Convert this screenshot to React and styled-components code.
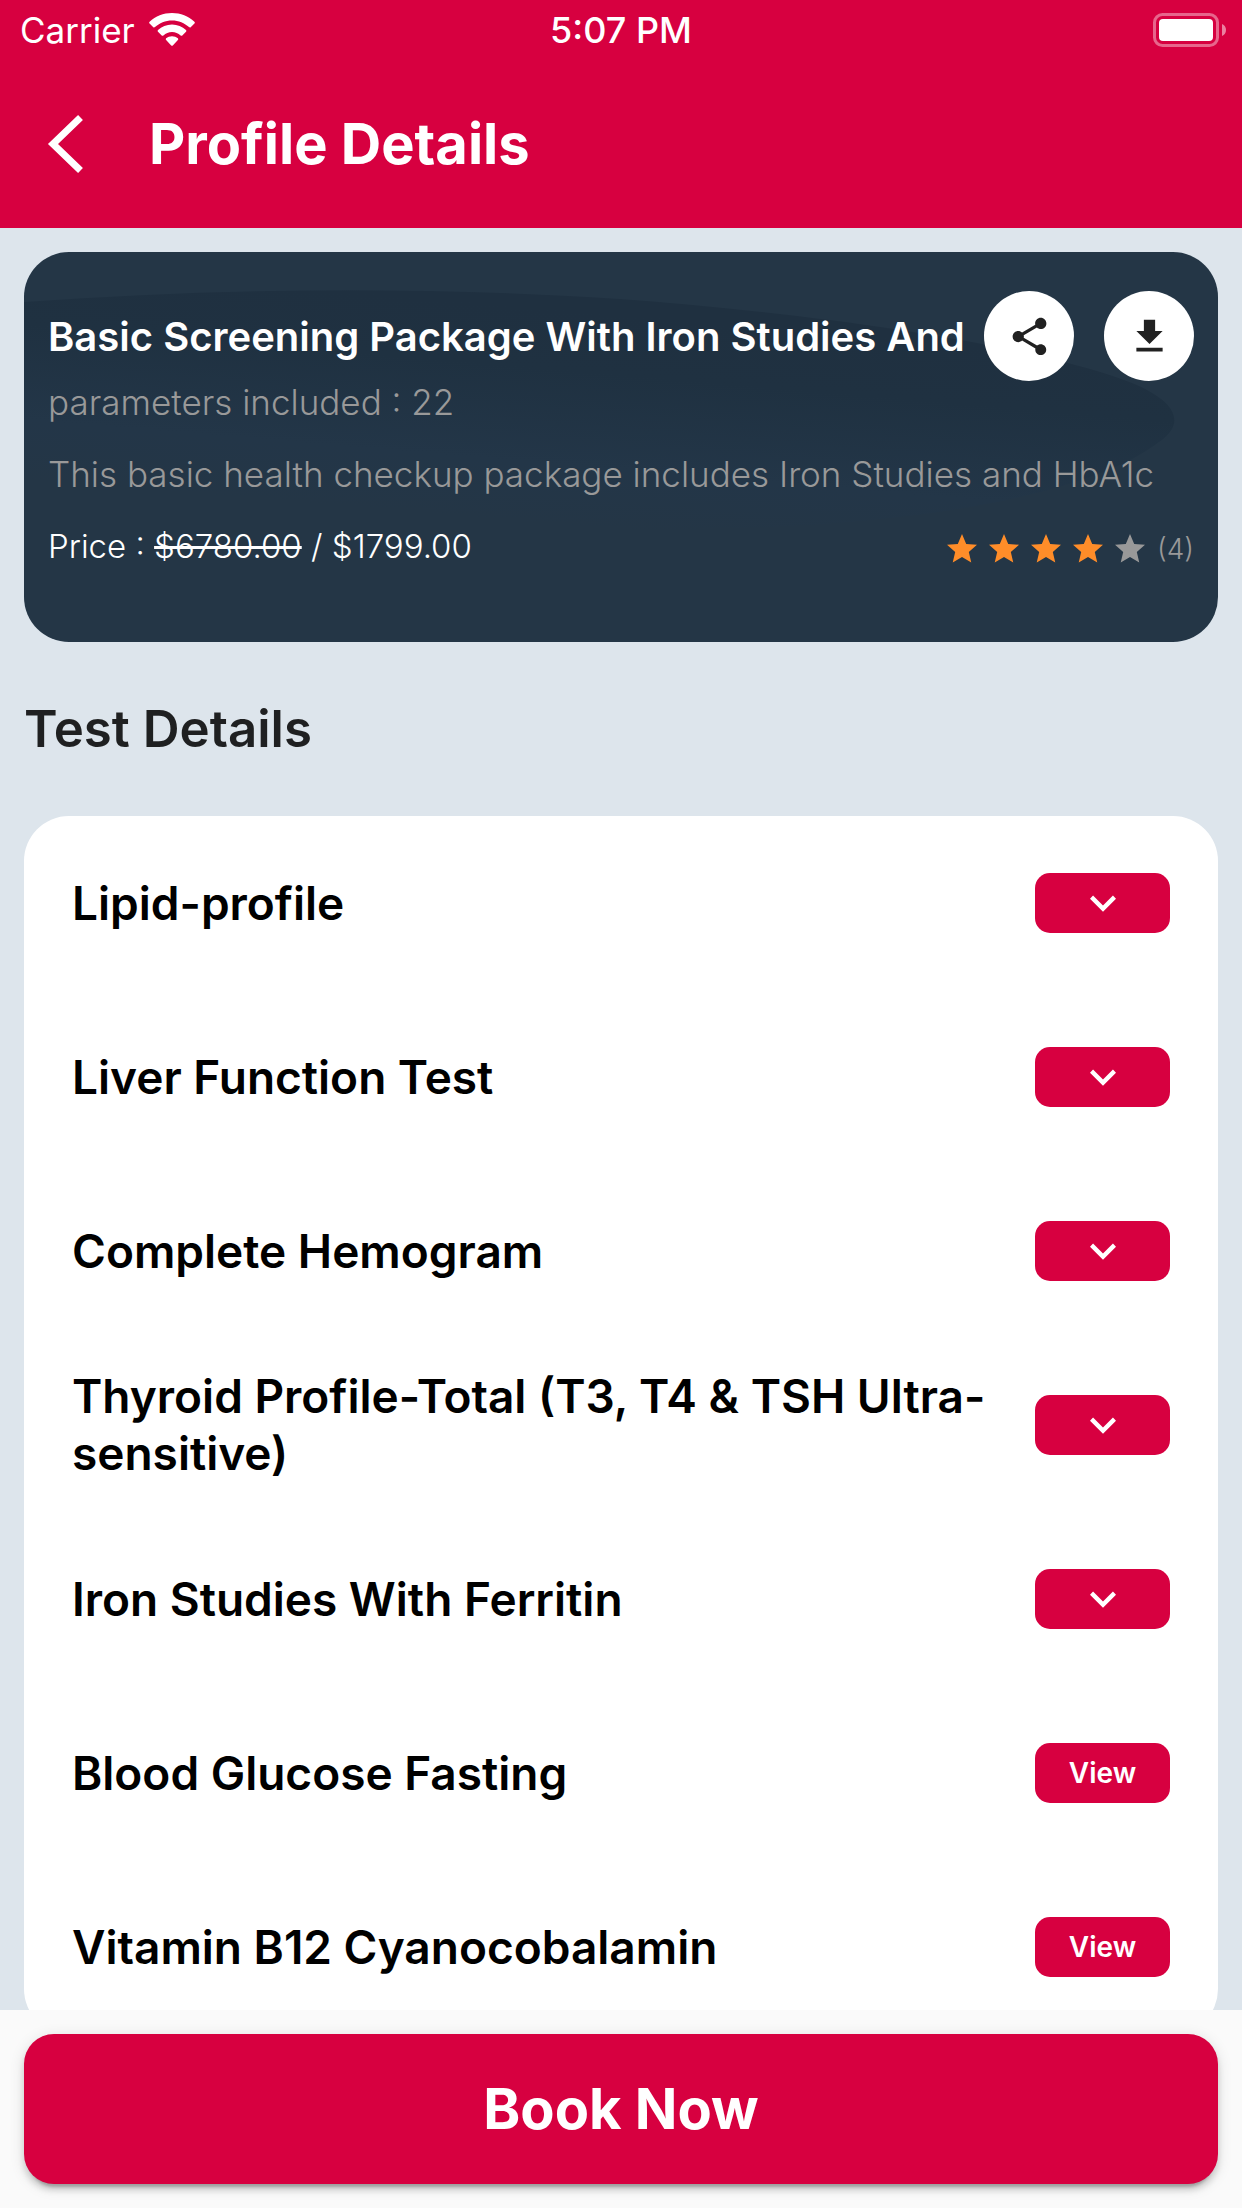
import React, { useState } from 'react';
import styled, { createGlobalStyle, ThemeProvider } from 'styled-components';

const theme = {
  colors: {
    primary: '#d70040',
    pageBg: '#dde5ec',
    footerBg: '#fafafa',
    cardBg: '#243646',
    white: '#ffffff',
    muted: '#999999',
    star: '#ff8d29',
    heading: '#1f2021',
    icon: '#212121'
  },
  radius: {
    small: '15px',
    medium: '30px',
    large: '45px'
  }
};

const GlobalStyle = createGlobalStyle`
  * {
    box-sizing: border-box;
  }

  body {
    margin: 0;
    font-family: Inter, 'Liberation Sans', sans-serif;
  }

  h1, h2, h3, p, ul {
    margin: 0;
    padding: 0;
  }

  button {
    border: none;
    padding: 0;
    font-family: inherit;
    cursor: pointer;
  }

  svg {
    display: block;
  }
`;

const Screen = styled.div`
  display: flex;
  flex-direction: column;
  height: 100vh;
  background-color: ${props => props.theme.colors.pageBg};
`;

const Header = styled.header`
  background-color: ${props => props.theme.colors.primary};
  color: ${props => props.theme.colors.white};
`;

const StatusBar = styled.div`
  display: grid;
  grid-template-columns: 1fr auto 1fr;
  align-items: center;
  height: 60px;
  padding: 0 15px;
`;

const Carrier = styled.div`
  display: flex;
  align-items: center;
  gap: 14px;
  padding-left: 5px;
  font-size: 35px;
`;

const Clock = styled.div`
  font-size: 36px;
  font-weight: 500;
`;

const Battery = styled.div`
  justify-self: end;
`;

const AppBar = styled.div`
  display: flex;
  align-items: center;
  gap: 62px;
  height: 168px;
  padding: 0 45px;
`;

const BackButton = styled.button`
  display: flex;
  background: transparent;
  color: inherit;
`;

const PageTitle = styled.h1`
  font-size: 56px;
  font-weight: 700;
`;

const Content = styled.main`
  flex: 1;
  min-height: 0;
  overflow-y: auto;
  scrollbar-width: none;
  padding: 24px;
`;

const PackageCard = styled.section`
  position: relative;
  display: flex;
  flex-direction: column;
  gap: 30px;
  padding: 39px 24px 75px;
  border-radius: ${props => props.theme.radius.large};
  background-color: ${props => props.theme.colors.cardBg};
  overflow: hidden;
`;

const CardShape = styled.svg`
  position: absolute;
  inset: 0;
  width: 100%;
  height: 100%;
`;

const PackageHeading = styled.div`
  position: relative;
`;

const TitleRow = styled.div`
  display: flex;
  align-items: center;
  gap: 30px;
  height: 90px;
`;

const PackageTitle = styled.h2`
  flex: 1;
  min-width: 0;
  margin-right: -12px;
  overflow: hidden;
  white-space: nowrap;
  color: ${props => props.theme.colors.white};
  font-size: 40px;
  font-weight: 600;
  line-height: 57px;
`;

const RoundButton = styled.button`
  display: flex;
  align-items: center;
  justify-content: center;
  width: 90px;
  height: 90px;
  border-radius: 50%;
  background-color: ${props => props.theme.colors.white};
  color: ${props => props.theme.colors.icon};
`;

const PackageText = styled.p`
  position: relative;
  color: ${props => props.theme.colors.muted};
  font-size: 35px;
  font-weight: 300;
  line-height: 42px;
`;

const PriceRow = styled.div`
  position: relative;
  display: flex;
  align-items: flex-end;
  justify-content: space-between;
`;

const Price = styled.p`
  color: ${props => props.theme.colors.white};
  font-size: 33px;
  font-weight: 300;
  line-height: 42px;
`;

const Rating = styled.div`
  display: flex;
  align-items: center;
  gap: 6px;
`;

const Star = styled.svg`
  width: 36px;
  height: 36px;
  fill: ${props => props.$filled ? props.theme.colors.star : props.theme.colors.muted};
`;

const RatingCount = styled.span`
  padding-left: 3px;
  color: ${props => props.theme.colors.muted};
  font-size: 28px;
  font-weight: 300;
  line-height: 36px;
`;

const SectionTitle = styled.h2`
  color: ${props => props.theme.colors.heading};
  font-size: 51px;
  font-weight: 600;
  line-height: 174px;
`;

const TestList = styled.ul`
  list-style: none;
  padding: 0 48px;
  border-radius: ${props => props.theme.radius.large};
  background-color: ${props => props.theme.colors.white};
`;

const TestRow = styled.li`
  display: flex;
  align-items: center;
  justify-content: space-between;
  gap: 24px;
  min-height: 174px;
`;

const TestName = styled.h3`
  color: #000000;
  font-size: 46px;
  font-weight: 600;
  line-height: 57px;
`;

const RowButton = styled.button`
  display: flex;
  flex-shrink: 0;
  align-items: center;
  justify-content: center;
  width: 135px;
  height: 60px;
  border-radius: ${props => props.theme.radius.small};
  background-color: ${props => props.theme.colors.primary};
  color: ${props => props.theme.colors.white};
  font-size: 28px;
  font-weight: 600;
`;

const Footer = styled.footer`
  padding: 24px;
  background-color: ${props => props.theme.colors.footerBg};
`;

const BookButton = styled.button`
  width: 100%;
  height: 150px;
  border-radius: ${props => props.theme.radius.medium};
  background-color: ${props => props.theme.colors.primary};
  color: ${props => props.theme.colors.white};
  font-size: 56px;
  font-weight: 700;
  box-shadow: 0 9px 3px -6px rgba(0, 0, 0, 0.2), 0 6px 6px rgba(0, 0, 0, 0.14), 0 3px 15px rgba(0, 0, 0, 0.12);
`;

const WifiIcon = () => (
  <svg width="46" height="34" viewBox="0 0 46 34" fill="currentColor">
    <path d="M23 0C14.4 0 6.500 3.300 .6 8.800Q-.3 9.700 .6 10.600L4.300 14.200Q5.100 14.900 6 14.100C10.400 9.900 16.400 7.400 23 7.400S35.600 9.900 40 14.100Q40.900 14.900 41.700 14.200L45.400 10.600Q46.300 9.700 45.400 8.800C39.500 3.300 31.600 0 23 0Z" />
    <path d="M23 11.500C17.600 11.500 12.700 13.600 9 17Q8.100 17.900 9 18.800L12.700 22.400Q13.500 23.200 14.400 22.400C16.700 20.300 19.700 19 23 19S29.300 20.300 31.600 22.400Q32.500 23.200 33.300 22.400L37 18.800Q37.900 17.900 37 17C33.300 13.600 28.400 11.500 23 11.500Z" />
    <path d="M23 23.200C20.700 23.200 18.700 24 17.100 25.300Q16.300 26.200 17.100 27.100L22.200 32.400Q23 33.300 23.800 32.400L28.900 27.100Q29.700 26.200 28.900 25.300C27.300 24 25.300 23.200 23 23.200Z" />
  </svg>
);

const BatteryIcon = () => (
  <svg width="74" height="34" viewBox="0 0 74 34" fill="none">
    <rect x="1.500" y="1.500" width="63" height="31" rx="8" stroke="#fff" strokeOpacity="0.4" strokeWidth="3" />
    <rect x="6" y="6" width="54" height="22" rx="4" fill="#fff" />
    <path d="M69 11C71.500 12 73 14.300 73 17S71.500 22 69 23Z" fill="#fff" fillOpacity="0.5" />
  </svg>
);

const BackIcon = () => (
  <svg width="42" height="60" viewBox="0 0 42 60" fill="none">
    <path d="M35.500 3.500L8 30L35.500 56.500" stroke="currentColor" strokeWidth="7" />
  </svg>
);

const ShareIcon = () => (
  <svg width="45" height="45" viewBox="0 0 24 24" fill="currentColor">
    <path d="M18 16.080c-.76 0-1.440.3-1.960.77L8.910 12.700c.05-.23.09-.46.09-.7s-.04-.47-.09-.7l7.050-4.110c.54.5 1.250.81 2.040.81 1.660 0 3-1.340 3-3s-1.340-3-3-3-3 1.340-3 3c0 .24.04.47.09.7L8.040 9.810C7.500 9.310 6.790 9 6 9c-1.660 0-3 1.340-3 3s1.340 3 3 3c.79 0 1.500-.31 2.040-.81l7.120 4.160c-.05.21-.08.43-.08.65 0 1.610 1.310 2.920 2.920 2.920s2.920-1.310 2.920-2.920-1.310-2.920-2.920-2.920z" />
  </svg>
);

const DownloadIcon = () => (
  <svg width="45" height="45" viewBox="0 0 24 24" fill="currentColor">
    <path d="M19 9h-4V3H9v6H5l7 7 7-7zM5 18v2h14v-2H5z" />
  </svg>
);

const ChevronDownIcon = () => (
  <svg width="52" height="52" viewBox="0 0 24 24" fill="currentColor">
    <path d="M16.590 8.590L12 13.170 7.410 8.590 6 10l6 6 6-6z" />
  </svg>
);

const tests = [
  { id: 1, name: 'Lipid-profile', expandable: true },
  { id: 2, name: 'Liver Function Test', expandable: true },
  { id: 3, name: 'Complete Hemogram', expandable: true },
  { id: 4, name: 'Thyroid Profile-Total (T3, T4 & TSH Ultra-sensitive)', expandable: true },
  { id: 5, name: 'Iron Studies With Ferritin', expandable: true },
  { id: 6, name: 'Blood Glucose Fasting', expandable: false },
  { id: 7, name: 'Vitamin B12 Cyanocobalamin', expandable: false }
];

const App = () => {
  const [openTest, setOpenTest] = useState(null);
  const rating = 4;

  const toggleTest = (id) => {
    setOpenTest(prev => (prev === id ? null : id));
  };

  return (
    <ThemeProvider theme={theme}>
      <GlobalStyle />
      <Screen>
        <Header>
          <StatusBar>
            <Carrier>
              Carrier
              <WifiIcon />
            </Carrier>
            <Clock>5:07 PM</Clock>
            <Battery>
              <BatteryIcon />
            </Battery>
          </StatusBar>
          <AppBar>
            <BackButton aria-label="Back">
              <BackIcon />
            </BackButton>
            <PageTitle>Profile Details</PageTitle>
          </AppBar>
        </Header>

        <Content>
          <PackageCard>
            {/* Soft dark wave behind the package text */}
            <CardShape viewBox="0 0 1194 390" preserveAspectRatio="none" aria-hidden="true">
              <defs>
                <linearGradient id="wave" gradientUnits="userSpaceOnUse" x1="610" y1="40" x2="590" y2="277">
                  <stop offset="0.1" stopColor="#1f3040" />
                  <stop offset="0.35" stopColor="#1f3141" />
                  <stop offset="0.75" stopColor="#233648" />
                  <stop offset="1" stopColor="#243646" />
                </linearGradient>
              </defs>
              <path
                d="M0 50C200 36 400 34 596 47C800 62 1000 92 1100 128C1150 146 1165 170 1135 190C1070 240 900 276 660 277C450 278 200 270 0 253Z"
                fill="url(#wave)"
              />
            </CardShape>
            <PackageHeading>
              <TitleRow>
                <PackageTitle>Basic Screening Package With Iron Studies And</PackageTitle>
                <RoundButton aria-label="Share">
                  <ShareIcon />
                </RoundButton>
                <RoundButton aria-label="Download">
                  <DownloadIcon />
                </RoundButton>
              </TitleRow>
              <PackageText>parameters included : 22</PackageText>
            </PackageHeading>
            <PackageText>This basic health checkup package includes Iron Studies and HbA1c</PackageText>
            <PriceRow>
              <Price>
                Price : <s>$6780.00</s> / $1799.00
              </Price>
              <Rating>
                {[1, 2, 3, 4, 5].map(value => (
                  <Star key={value} viewBox="0 0 24 24" $filled={value <= rating}>
                    <path d="M12 17.270L18.180 21l-1.640-7.030L22 9.240l-7.190-.61L12 2 9.190 8.630 2 9.240l5.460 4.730L5.820 21z" />
                  </Star>
                ))}
                <RatingCount>({rating})</RatingCount>
              </Rating>
            </PriceRow>
          </PackageCard>

          <SectionTitle>Test Details</SectionTitle>

          <TestList>
            {tests.map(test => (
              <TestRow key={test.id}>
                <TestName>{test.name}</TestName>
                {test.expandable ? (
                  <RowButton
                    aria-label={`Expand ${test.name}`}
                    aria-expanded={openTest === test.id}
                    onClick={() => toggleTest(test.id)}
                  >
                    <ChevronDownIcon />
                  </RowButton>
                ) : (
                  <RowButton>View</RowButton>
                )}
              </TestRow>
            ))}
          </TestList>
        </Content>

        <Footer>
          <BookButton>Book Now</BookButton>
        </Footer>
      </Screen>
    </ThemeProvider>
  );
};

export default App;
